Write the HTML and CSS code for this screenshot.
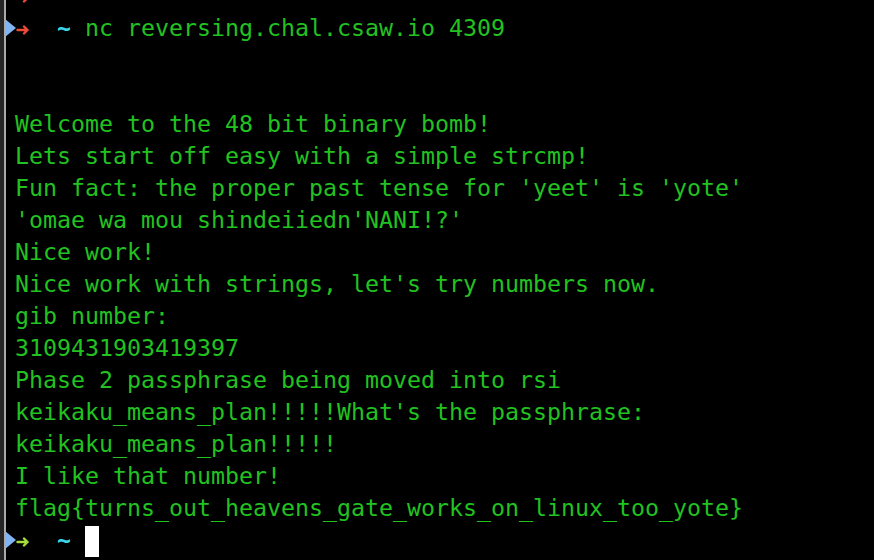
FILE: index.html
```html
<!DOCTYPE html>
<html>
<head>
<meta charset="utf-8">
<link rel="stylesheet" href="styles.css">
</head>
<body>
<div class="term">
  <div class="gutter"></div>
  <div class="rule"></div>
  <div class="screen">
    <div class="line first"><span class="arrow red"><svg viewBox="0 0 14 10" width="14" height="10"><path d="M1.5 5H11.5M8 1.5L11.5 5L8 8.5" fill="none" stroke="currentColor" stroke-width="2.4" stroke-linecap="round" stroke-linejoin="round"/></svg></span><span>  </span><span class="cyan">~</span><span> </span></div>
    <div class="line"><span class="mark"></span><span class="arrow red"><svg viewBox="0 0 14 10" width="14" height="10"><path d="M1.5 5H11.5M8 1.5L11.5 5L8 8.5" fill="none" stroke="currentColor" stroke-width="2.4" stroke-linecap="round" stroke-linejoin="round"/></svg></span><span>  </span><span class="cyan">~</span><span> nc reversing.chal.csaw.io 4309</span></div>
    <div class="line"> </div>
    <div class="line"> </div>
    <div class="line">Welcome to the 48 bit binary bomb!</div>
    <div class="line">Lets start off easy with a simple strcmp!</div>
    <div class="line">Fun fact: the proper past tense for 'yeet' is 'yote'</div>
    <div class="line">'omae wa mou shindeiiedn'NANI!?'</div>
    <div class="line">Nice work!</div>
    <div class="line">Nice work with strings, let's try numbers now.</div>
    <div class="line">gib number:</div>
    <div class="line">3109431903419397</div>
    <div class="line">Phase 2 passphrase being moved into rsi</div>
    <div class="line">keikaku_means_plan!!!!!What's the passphrase:</div>
    <div class="line">keikaku_means_plan!!!!!</div>
    <div class="line">I like that number!</div>
    <div class="line">flag{turns_out_heavens_gate_works_on_linux_too_yote}</div>
    <div class="line"><span class="mark"></span><span class="arrow lime"><svg viewBox="0 0 14 10" width="14" height="10"><path d="M1.5 5H11.5M8 1.5L11.5 5L8 8.5" fill="none" stroke="currentColor" stroke-width="2.4" stroke-linecap="round" stroke-linejoin="round"/></svg></span><span>  </span><span class="cyan">~</span><span> </span><span class="cursor"></span></div>
  </div>
</div>
</body>
</html>
```

FILE: styles.css
```css
html, body {
  margin: 0;
  padding: 0;
  background: #000;
  height: 100%;
  overflow: hidden;
}

.term {
  display: flex;
  height: 560px;
  background: #000;
  overflow: hidden;
}

.gutter {
  width: 4px;
  flex: none;
  background: #262626;
}

.rule {
  width: 2px;
  flex: none;
  background: #a9a9a9;
}

.screen {
  flex: 1;
  padding-left: 9px;
  font-family: "DejaVu Sans Mono", "Liberation Mono", monospace;
  font-size: 23.25px;
  line-height: 32px;
  color: #22c220;
}

.line {
  height: 32px;
  position: relative;
  white-space: pre;
}

.line.first {
  margin-top: -20px;
}

.arrow {
  display: inline-block;
  width: 14px;
  height: 32px;
  vertical-align: top;
  position: relative;
}

.arrow svg {
  position: absolute;
  left: 1px;
  top: 13px;
}

.red {
  color: #ef4a37;
}

.lime {
  color: #a5dc3b;
}

.cyan {
  color: #3cd4e8;
  font-weight: bold;
}

.cursor {
  display: inline-block;
  width: 14px;
  height: 31px;
  background: #ffffff;
  vertical-align: top;
  margin-top: 2px;
}

.mark {
  position: absolute;
  left: -10px;
  top: 7px;
  width: 0;
  height: 0;
  border-top: 9px solid transparent;
  border-bottom: 9px solid transparent;
  border-left: 11px solid #80b4f2;
}
```
